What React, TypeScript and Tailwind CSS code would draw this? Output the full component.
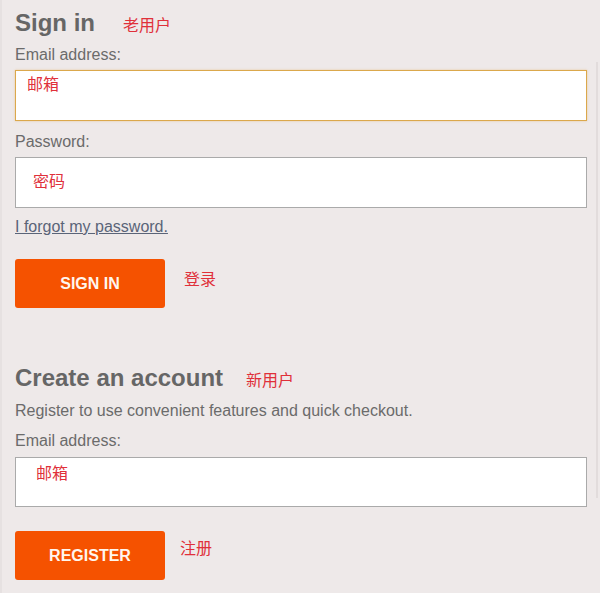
import type { ReactNode } from 'react';

const cn = '"Noto Sans CJK SC", sans-serif';

const Note = ({ children, className = '' }: { children: ReactNode; className?: string }) => (
  <span className={`text-[16px] font-normal text-[#e0303a] ${className}`} style={{ fontFamily: cn }}>
    {children}
  </span>
);

const Label = ({ children, className = '' }: { children: ReactNode; className?: string }) => (
  <div className={`text-[16px] leading-5 text-[#6b6b6b] ${className}`}>{children}</div>
);

const Field = ({ children, className = '' }: { children: ReactNode; className?: string }) => (
  <div className={`w-[572px] border bg-white ${className}`}>{children}</div>
);

const Button = ({ children }: { children: ReactNode }) => (
  <button className="flex h-full w-[150px] items-center justify-center rounded-[3px] bg-[#f55200] text-[16px] font-bold text-[#fff6ee]">
    {children}
  </button>
);

export default function App() {
  return (
    <div
      className="flex min-h-[593px] w-[600px] border-l-2 border-[#e6e1e1] bg-[#eee9e9] pl-[13px] pt-[9px]"
      style={{ fontFamily: '"Liberation Sans", Arial, sans-serif' }}
    >
      <div className="flex flex-col">
        <h2 className="text-[24px] font-bold leading-7 text-[#666]">
          Sign in
          <Note className="ml-[28px]">老用户</Note>
        </h2>
        <Label className="mt-[7px]">Email address:</Label>
        <Field className="mt-[5px] h-[51px] border-[#dba84c] pl-[11px] pt-[2px] shadow-[0_0_2px_rgba(230,170,80,0.5)]">
          <Note className="leading-5">邮箱</Note>
        </Field>
        <Label className="mt-[11px]">Password:</Label>
        <Field className="mt-[5px] flex h-[51px] items-center border-[#aaa] pb-[5px] pl-[17px]">
          <Note className="leading-5">密码</Note>
        </Field>
        <a href="#" className="mt-[9px] self-start text-[16px] leading-5 text-[#5a6478] underline">
          I forgot my password.
        </a>
        <div className="mt-[22px] flex h-[49px] items-center">
          <Button>SIGN IN</Button>
          <Note className="mb-[12px] ml-[19px]">登录</Note>
        </div>
        <h2 className="mt-[56px] text-[24px] font-bold leading-7 text-[#666]">
          Create an account
          <Note className="ml-[23px]">新用户</Note>
        </h2>
        <Label className="mt-[8px]">Register to use convenient features and quick checkout.</Label>
        <Label className="mt-[10px]">Email address:</Label>
        <Field className="mt-[6px] h-[50px] border-[#aaa] pl-[20px] pt-[4px]">
          <Note className="leading-5">邮箱</Note>
        </Field>
        <div className="mt-[24px] flex h-[49px] items-center">
          <Button>REGISTER</Button>
          <Note className="mb-[18px] ml-[15px]">注册</Note>
        </div>
      </div>
      <div className="ml-[9px] mt-[53px] h-[436px] w-[2px] bg-[#e2dcdc]" />
    </div>
  );
}
